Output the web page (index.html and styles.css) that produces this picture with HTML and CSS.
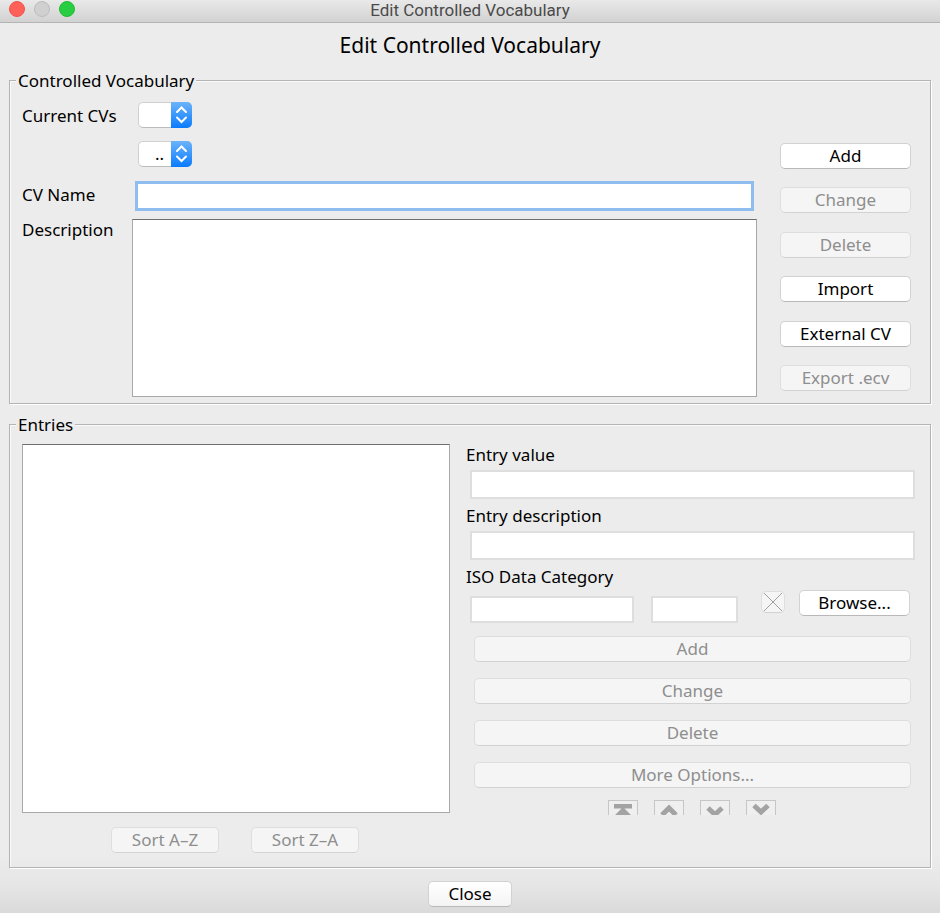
FILE: index.html
```html
<!DOCTYPE html>
<html lang="en">
<head>
<meta charset="utf-8">
<title>Edit Controlled Vocabulary</title>
<link rel="stylesheet" href="styles.css">
</head>
<body>
<header class="titlebar">
  <div class="lights">
    <button class="light light-close" type="button" aria-label="Close window"></button>
    <button class="light light-min" type="button" aria-label="Minimize" disabled></button>
    <button class="light light-zoom" type="button" aria-label="Zoom"></button>
  </div>
  <span class="window-title">Edit Controlled Vocabulary</span>
</header>
<main>
  <h1>Edit Controlled Vocabulary</h1>

  <fieldset class="group">
    <legend>Controlled Vocabulary</legend>
    <div class="vocab">
      <div class="vocab-form">
        <label for="cvs">Current CVs</label>
        <span class="popup">
          <select id="cvs"><option></option></select>
          <svg viewBox="0 0 21 26" aria-hidden="true"><path d="M6 10l4.500-4.500L15 10M6 15.500l4.500 4.500 4.500-4.500"/></svg>
        </span>
        <span></span>
        <span class="popup">
          <select aria-label="Language"><option>..</option></select>
          <svg viewBox="0 0 21 26" aria-hidden="true"><path d="M6 10l4.500-4.500L15 10M6 15.500l4.500 4.500 4.500-4.500"/></svg>
        </span>
        <label for="name">CV Name</label>
        <input class="focused" id="name" type="text">
        <label class="top" for="desc">Description</label>
        <textarea class="well" id="desc"></textarea>
      </div>
      <div class="vocab-actions">
        <button class="btn" type="button">Add</button>
        <button class="btn" type="button" disabled>Change</button>
        <button class="btn" type="button" disabled>Delete</button>
        <button class="btn" type="button">Import</button>
        <button class="btn" type="button">External CV</button>
        <button class="btn" type="button" disabled>Export .ecv</button>
      </div>
    </div>
  </fieldset>

  <fieldset class="group entries-group">
    <legend>Entries</legend>
    <div class="entries">
      <div class="entry-list">
        <select class="well" size="12" aria-label="Entries"></select>
        <div class="sort">
          <button class="btn" type="button" disabled>Sort A–Z</button>
          <button class="btn" type="button" disabled>Sort Z–A</button>
        </div>
      </div>
      <div class="entry-form">
        <label for="value">Entry value</label>
        <input class="field" id="value" type="text">
        <label for="edesc">Entry description</label>
        <input class="field" id="edesc" type="text">
        <label for="iso">ISO Data Category</label>
        <div class="iso">
          <input class="field iso-name" id="iso" type="text">
          <input class="field iso-id" type="text" aria-label="Category id">
          <button class="btn clear" type="button" aria-label="Clear category" disabled>
            <svg viewBox="0 0 22 20" aria-hidden="true"><path d="M2 1l18 18M20 1L2 19"/></svg>
          </button>
          <button class="btn browse" type="button">Browse...</button>
        </div>
        <div class="entry-actions">
          <button class="btn" type="button" disabled>Add</button>
          <button class="btn" type="button" disabled>Change</button>
          <button class="btn" type="button" disabled>Delete</button>
          <button class="btn" type="button" disabled>More Options...</button>
        </div>
        <div class="movers">
          <button type="button" aria-label="Move to top" disabled><svg viewBox="0 0 28 28" aria-hidden="true"><path class="solid" d="M5 3h18v4.500h-7.500L23 15v3H5v-3l7.500-7.500H5z"/></svg></button>
          <button type="button" aria-label="Move up" disabled><svg viewBox="0 0 28 28" aria-hidden="true"><path d="M7 14l7-7 7 7"/></svg></button>
          <button type="button" aria-label="Move down" disabled><svg viewBox="0 0 28 28" aria-hidden="true"><path d="M7 7l7 6.500L21 7"/></svg></button>
          <button type="button" aria-label="Move to bottom" disabled><svg viewBox="0 0 28 28" aria-hidden="true"><path d="M7 4.500l7 6.500 7-6.500"/></svg></button>
        </div>
      </div>
    </div>
  </fieldset>
</main>
<footer><button class="btn close" type="button">Close</button></footer>
</body>
</html>
```
FILE: styles.css
```css
* { box-sizing: border-box; }

body {
  margin: 0;
  min-height: 100vh;
  display: flex;
  flex-direction: column;
  background: linear-gradient(to top, #dadada, #e6e6e6 28px, #ececec 60px) #ececec;
  color: #000;
  font: 17px/22px "Noto Sans", sans-serif;
}

button, input, select, textarea {
  font: inherit;
  color: inherit;
  margin: 0;
  padding: 0;
  border-radius: 0;
  appearance: none;
}

svg { display: block; fill: none; }

.titlebar {
  display: grid;
  grid-template-columns: 1fr auto 1fr;
  align-items: start;
  height: 23px;
  border-bottom: 1px solid #b4b4b4;
  background: linear-gradient(#e9e9e9, #d2d2d2);
}
.lights { display: flex; gap: 9px; padding: 1px 0 0 9px; }
.light { width: 16px; height: 16px; border: 1px solid #f0524b; border-radius: 50%; background: #ff6159; }
.light-min { border-color: #bcbcbc; background: #d0d0d0; }
.light-zoom { border-color: #22bb34; background: #28cd41; }
.window-title { color: #4a4a4a; font: 17px/20px Roboto, sans-serif; }

main { padding: 0 9px; }

h1 { margin: 9px 0 10px; font-size: 21px; line-height: 26px; font-weight: 400; text-align: center; }

.group {
  min-width: 0;
  margin: 0 0 8px;
  padding: 10px 12px 6px;
  border: 1px solid #b4b4b4;
  box-shadow: 1px 1px 0 #fff, inset 1px 1px 0 #fafafa;
}
.group legend { margin-left: -6px; padding: 2px 2px 0; background: #ececec; }

.vocab { display: flex; gap: 23px; padding-right: 7px; }
.vocab-form {
  flex: 1;
  display: grid;
  grid-template-columns: 110px 1fr;
  grid-template-rows: 39px 40px 38px 178px;
  align-items: start;
}
.vocab-form label { line-height: 28px; }
.vocab-form .top { line-height: 22px; }
.vocab-form .focused { height: 30px; margin: 0 3px; }

.popup { position: relative; width: 54px; height: 26px; margin-left: 6px; }
.popup select {
  display: block;
  width: 100%;
  height: 100%;
  padding-left: 16px;
  border: 1px solid #d0d0d0;
  border-bottom-color: #bbb;
  border-radius: 5px;
  background: #fff;
}
.popup svg {
  position: absolute;
  top: 0;
  right: 0;
  width: 21px;
  height: 26px;
  border-radius: 0 5px 5px 0;
  background: linear-gradient(#6cb3fa, #0a7bff);
  stroke: #fff;
  stroke-width: 2;
  stroke-linecap: round;
  pointer-events: none;
}

.focused { border: 3px solid #8fbdf0; background: #fff; outline: 0; }

.well {
  display: block;
  width: 100%;
  height: 100%;
  border: 1px solid #a8a8a8;
  border-top-color: #6e6e6e;
  background: #fff;
  resize: none;
  overflow: hidden;
}

.btn {
  height: 26px;
  border: 1px solid #d2d2d2;
  border-bottom-color: #b8b8b8;
  border-radius: 5px;
  background: #fff;
  line-height: 22px;
  text-align: center;
}
.btn:disabled { border-color: #dedede; border-bottom-color: #d2d2d2; background: #f5f5f5; color: #8e8e8e; }

.vocab-actions {
  display: flex;
  flex-direction: column;
  justify-content: space-between;
  width: 131px;
  padding: 41px 0 6px;
}

.entries-group { margin: 0; padding: 8px 12px 14px; }
.entries {
  display: grid;
  grid-template-columns: minmax(0, 428fr) minmax(0, 449fr);
  gap: 16px;
  min-height: 409px;
  padding-right: 3px;
}
.entry-list { display: flex; flex-direction: column; gap: 14px; }
.entry-list .well { flex: 1; }
.sort { display: flex; justify-content: center; gap: 32px; padding-right: 2px; }
.sort .btn { width: 108px; }

.entry-form { display: flex; flex-direction: column; }
.field { height: 29px; margin: 4px 0 6px 4px; border: 2px solid #dedede; background: #fff; }
.iso { display: flex; align-items: flex-start; padding: 2px 5px 0 4px; }
.iso .field { height: 27px; margin: 6px 0 0; }
.iso-name { flex: 165; min-width: 0; }
.iso .iso-id { flex: 86; min-width: 0; margin-left: 17px; }
.clear { width: 24px; height: 22px; margin: 1px 14px 0 23px; }
.clear svg { width: 22px; height: 20px; stroke: #a0a0a0; }
.browse { width: 111px; }
.entry-actions { display: flex; flex-direction: column; gap: 16px; padding: 13px 4px 12px 8px; }
.movers { display: flex; justify-content: center; gap: 16px; height: 15px; padding-left: 3px; overflow: hidden; }
.movers button { flex: none; width: 30px; height: 30px; border: 1px solid #c6c6c6; background: #efefef; }
.movers svg { width: 28px; height: 28px; stroke: #a3a3a3; stroke-width: 5; }
.movers .solid { fill: #a3a3a3; stroke: none; }

footer { display: flex; justify-content: center; padding: 13px 0 5px; }
.close { width: 84px; background: linear-gradient(#fff, #f4f4f4); }
```
